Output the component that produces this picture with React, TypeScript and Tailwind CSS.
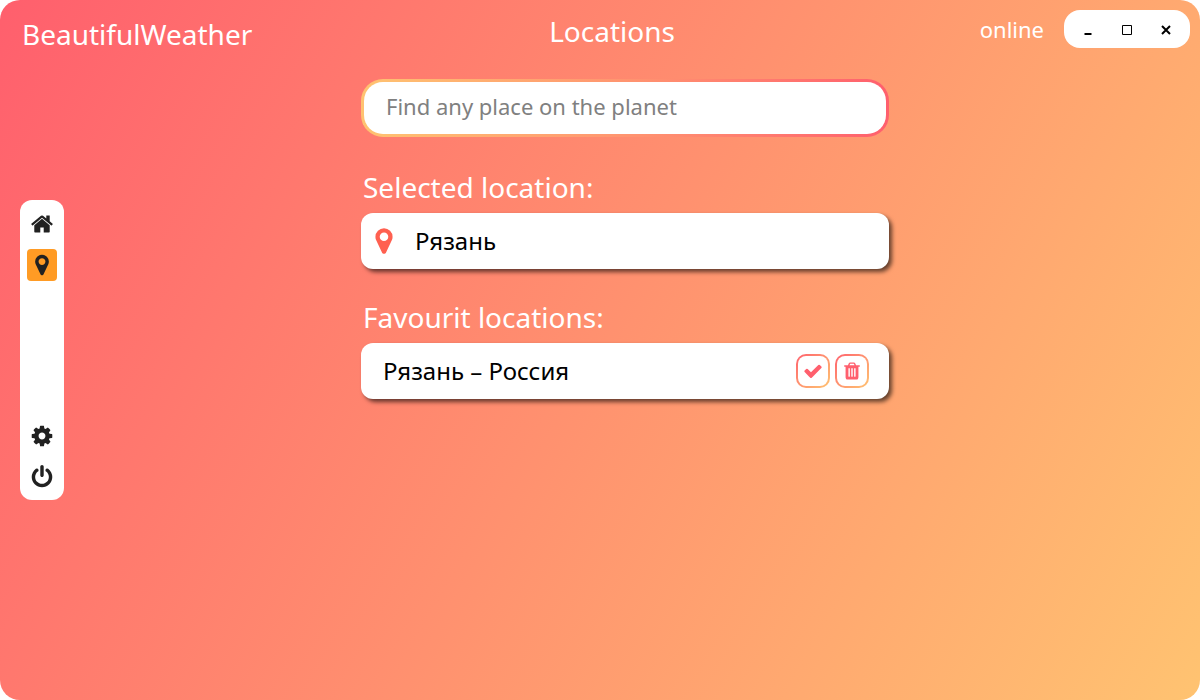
import { useState, type ReactNode } from "react";

const ICONS = {
  home: "M1472 992v480q0 26-19 45t-45 19h-384v-384h-256v384h-384q-26 0-45-19t-19-45v-480q0-1 .5-3t.5-3l575-474 575 474q1 2 1 6zm223-69l-62 74q-8 9-21 11h-3q-13 0-21-7l-692-577-692 577q-12 8-24 7-13-2-21-11l-62-74q-8-10-7-23.5t11-21.5l719-599q32-26 76-26t76 26l244 204v-195q0-14 9-23t23-9h192q14 0 23 9t9 23v408l219 182q10 8 11 21.5t-7 23.5z",
  marker:
    "M1152 640q0-106-75-181t-181-75-181 75-75 181 75 181 181 75 181-75 75-181zm256 0q0 109-33 179l-364 774q-16 33-47.5 52t-67.5 19-67.5-19-46.5-52l-365-774q-33-70-33-179 0-212 150-362t362-150 362 150 150 362z",
  cog: "M1152 896q0-106-75-181t-181-75-181 75-75 181 75 181 181 75 181-75 75-181zm512-109v222q0 12-8 23t-20 13l-185 28q-19 54-39 91 35 50 107 138 10 12 10 25t-9 23q-27 37-99 108t-94 71q-12 0-26-9l-138-108q-44 23-91 38-16 136-29 186-7 28-36 28h-222q-14 0-24.5-8.5t-11.5-21.5l-28-184q-49-16-90-37l-141 107q-10 9-25 9-14 0-25-11-126-114-165-168-7-10-7-23 0-12 8-23 15-21 51-66.5t54-70.5q-27-50-41-99l-183-27q-13-2-21-12.5t-8-23.5v-222q0-12 8-23t19-13l186-28q14-46 39-92-40-57-107-138-10-12-10-24 0-10 9-23 26-36 98.5-107.5t94.5-71.5q13 0 26 10l138 107q44-23 91-38 16-136 29-186 7-28 36-28h222q14 0 24.5 8.5t11.5 21.5l28 184q49 16 90 37l142-107q9-9 24-9 13 0 25 10 129 119 165 170 7 8 7 22 0 12-8 23-15 21-51 66.5t-54 70.5q26 50 41 98l183 28q13 2 21 12.5t8 23.5z",
  power:
    "M1664 896q0 156-61 298t-164 245-245 164-298 61-298-61-245-164-164-245-61-298q0-182 80.5-343t226.5-270q43-32 95.5-25t83.5 50q32 42 24.5 94.5t-49.5 84.5q-98 74-151.5 181t-53.5 228q0 104 40.5 198.5t109.5 163.5 163.5 109.5 198.5 40.5 198.5-40.5 163.5-109.5 109.5-163.5 40.5-198.5q0-121-53.5-228t-151.5-181q-42-32-49.5-84.5t24.5-94.5q31-43 84-50t95 25q146 109 226.5 270t80.5 343zm-640-768v640q0 52-38 90t-90 38-90-38-38-90v-640q0-52 38-90t90-38 90 38 38 90z",
  check:
    "M1671 566q0 40-28 68l-724 724-136 136q-28 28-68 28t-68-28l-136-136-362-362q-28-28-28-68t28-68l136-136q28-28 68-28t68 28l294 295 656-657q28-28 68-28t68 28l136 136q28 28 28 68z",
  trash:
    "M704 1376v-704q0-14-9-23t-23-9h-64q-14 0-23 9t-9 23v704q0 14 9 23t23 9h64q14 0 23-9t9-23zm256 0v-704q0-14-9-23t-23-9h-64q-14 0-23 9t-9 23v704q0 14 9 23t23 9h64q14 0 23-9t9-23zm256 0v-704q0-14-9-23t-23-9h-64q-14 0-23 9t-9 23v704q0 14 9 23t23 9h64q14 0 23-9t9-23zm-544-992h448l-48-117q-7-9-17-11h-317q-10 2-17 11zm928 32v64q0 14-9 23t-23 9h-96v948q0 83-47 143.5t-113 60.5h-832q-66 0-113-58.5t-47-141.5v-952h-96q-14 0-23-9t-9-23v-64q0-14 9-23t23-9h309l70-167q15-37 54-63t79-26h320q40 0 79 26t54 63l70 167h309q14 0 23 9t9 23z",
};

function Icon({ name, className }: { name: keyof typeof ICONS; className: string }) {
  return (
    <svg viewBox="0 0 1792 1792" fill="currentColor" aria-hidden="true" className={className}>
      <path d={ICONS[name]} />
    </svg>
  );
}

function NavButton({ name, label, active }: { name: keyof typeof ICONS; label: string; active?: boolean }) {
  return (
    <button
      type="button"
      aria-label={label}
      className={
        active
          ? "flex h-8 w-[30px] items-center justify-center rounded bg-[#ff9b24] text-[#212121]"
          : "flex h-8 w-[30px] items-center justify-center rounded text-[#212121]"
      }
    >
      <Icon name={name} className="size-6" />
    </button>
  );
}

function WindowButton({ label, children }: { label: string; children: ReactNode }) {
  return (
    <button type="button" aria-label={label} className="flex h-full flex-1 items-center justify-center">
      <svg viewBox="0 0 12 12" fill="none" stroke="black" className="size-3" aria-hidden="true">
        {children}
      </svg>
    </button>
  );
}

function ActionButton({ name, label }: { name: keyof typeof ICONS; label: string }) {
  return (
    <button
      type="button"
      aria-label={label}
      className="size-[34px] rounded-[10px] bg-linear-to-br from-[#ff5f6d] to-[#ffc371] p-[2px]"
    >
      <span className="flex size-full items-center justify-center rounded-lg bg-white text-[#ff5f6d]">
        <Icon name={name} className="size-5" />
      </span>
    </button>
  );
}

function Card({ children }: { children: ReactNode }) {
  return (
    <div className="flex h-14 items-center rounded-xl bg-white pr-5 text-2xl text-black shadow-[3px_3px_4px_rgba(0,0,0,0.6)]">
      {children}
    </div>
  );
}

export default function App() {
  const [query, setQuery] = useState("");

  return (
    <div className="min-h-screen bg-white">
      <div className="flex min-h-screen flex-col rounded-[20px] bg-[linear-gradient(120deg,#ff5f6d,#ffc371)] font-['Noto_Sans',sans-serif] text-white">
        <header className="grid grid-cols-[1fr_auto_1fr] items-start px-[10px] pt-[10px]">
          <div className="pl-3 text-[28px] leading-[48px]">BeautifulWeather</div>
          <h1 className="pl-6 text-[28px] leading-[42px]">Locations</h1>
          <div className="flex items-center justify-end gap-5">
            <span className="text-[22px] leading-8">online</span>
            <div className="flex h-[38px] w-[126px] items-center rounded-2xl bg-white px-[5px]">
              <WindowButton label="Minimize">
                <path d="M2.5 11h7" strokeWidth="2" />
              </WindowButton>
              <WindowButton label="Maximize">
                <path d="M1.5 2.5h9v9h-9z" />
              </WindowButton>
              <WindowButton label="Close">
                <path d="M2 3l8 8M10 3l-8 8" strokeWidth="2" />
              </WindowButton>
            </div>
          </div>
        </header>

        <div className="flex flex-1 items-start pt-[21px]">
          <nav
            aria-label="Main"
            className="mt-[121px] ml-5 flex h-[300px] w-11 shrink-0 flex-col items-center justify-between rounded-xl bg-white pt-2 pb-[7px]"
          >
            <div className="flex flex-col gap-[9px]">
              <NavButton name="home" label="Home" />
              <NavButton name="marker" label="Locations" active />
            </div>
            <div className="flex flex-col gap-[9px]">
              <NavButton name="cog" label="Settings" />
              <NavButton name="power" label="Exit" />
            </div>
          </nav>

          <main className="flex flex-1 justify-center pr-[14px]">
            <div className="w-full max-w-[528px]">
              <div className="rounded-[22px] bg-linear-to-r from-[#ffc371] to-[#ff5f6d] p-[3px]">
                <input
                  type="text"
                  aria-label="Find any place on the planet"
                  placeholder="Find any place on the planet"
                  value={query}
                  onChange={(e) => setQuery(e.target.value)}
                  className="block h-[52px] w-full rounded-[19px] bg-white px-[22px] pb-1 text-[22px] text-black outline-none placeholder:text-[#808080]"
                />
              </div>

              <section className="mt-8">
                <h2 className="mb-2 pl-[2px] text-[28px] leading-9">Selected location:</h2>
                <Card>
                  <Icon name="marker" className="ml-2 size-[30px] text-[#ff6050]" />
                  <span className="ml-4">Рязань</span>
                </Card>
              </section>

              <section className="mt-[30px]">
                <h2 className="mb-2 pl-[2px] text-[28px] leading-9">Favourit locations:</h2>
                <Card>
                  <span className="flex-1 pl-[22px]">Рязань – Россия</span>
                  <div className="flex gap-[5px]">
                    <ActionButton name="check" label="Select location" />
                    <ActionButton name="trash" label="Delete location" />
                  </div>
                </Card>
              </section>
            </div>
          </main>
        </div>
      </div>
    </div>
  );
}
